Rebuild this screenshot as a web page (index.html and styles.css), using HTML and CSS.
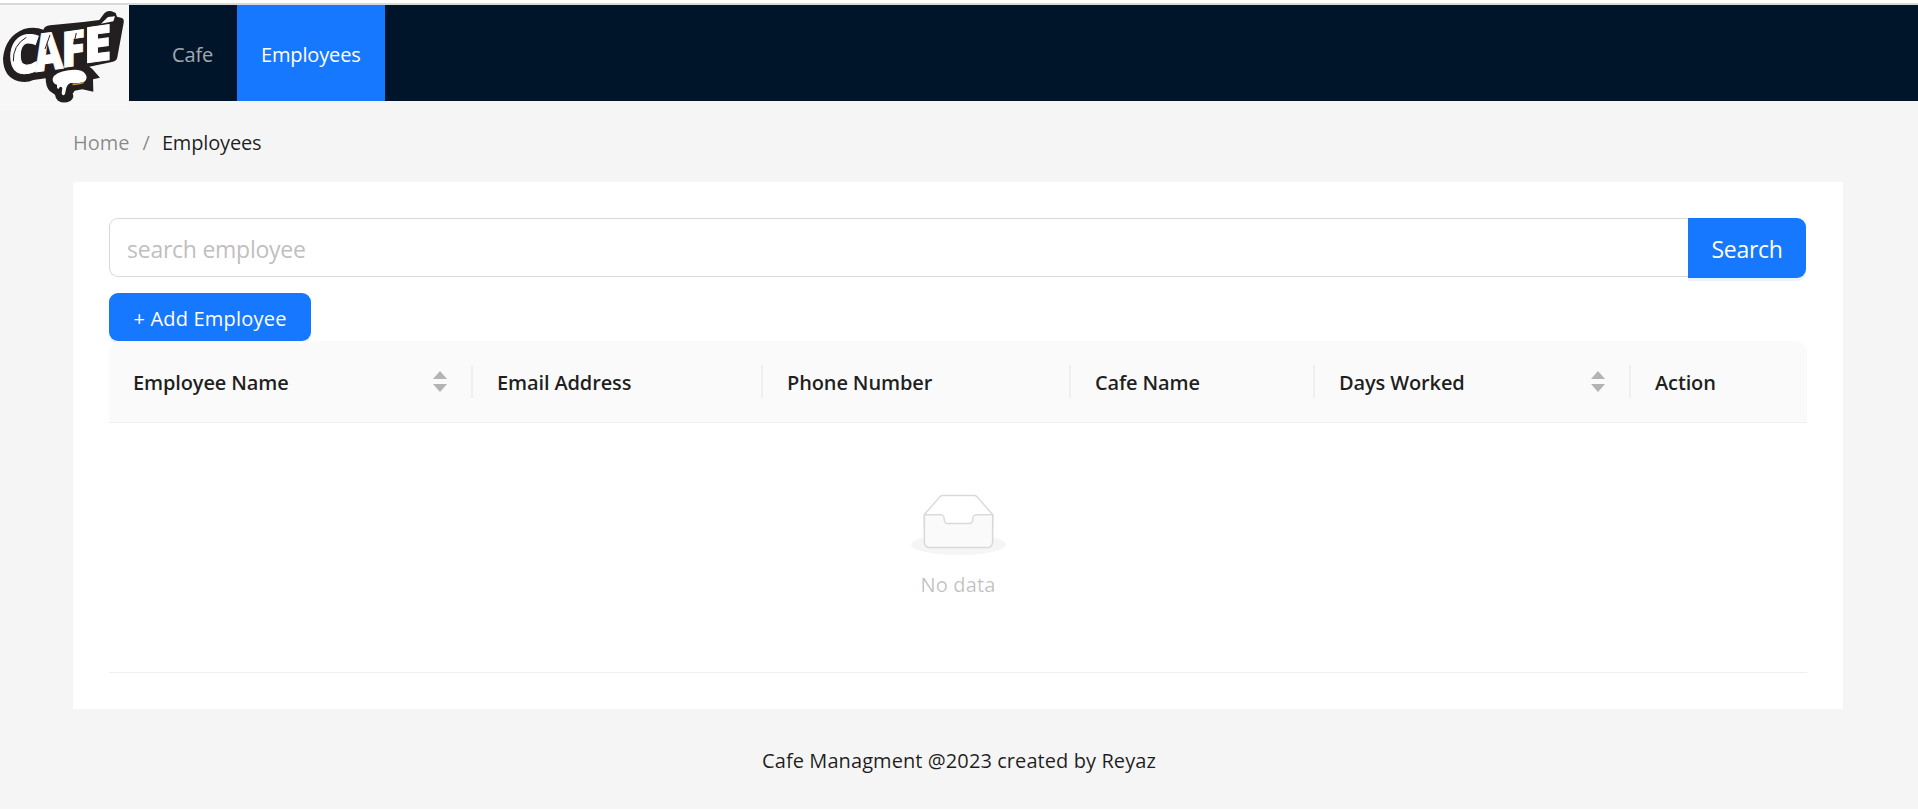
FILE: index.html
```html
<!DOCTYPE html>
<html lang="en">
<head>
<meta charset="utf-8">
<title>Cafe Management</title>
<link rel="stylesheet" href="styles.css">
</head>
<body>
<div class="layout">
  <header class="header">
    <svg class="logo" viewBox="0 15 387 315" role="img" aria-label="Cafe logo">
      <rect x="0" y="15" width="387" height="315" fill="#f7f7f7"/>
      <path d="M130 89Q135 77 150 76L250 66L298 60L313 40Q322 31 335 34L347 39L351 50L366 54Q373 58 371 68L352 172Q350 183 339 185L268 200L277 207L300 233L279 238L280 275L247 268L224 272L218 281Q224 292 212 302Q192 313 174 302Q166 294 165 284L149 273Q137 260 137 235L100 240Q82 250 55 244Q10 232 9 175Q15 110 72 87Q105 79 130 89Z" fill="#231f20"/>
      <g class="logo-letters">
        <text x="0" y="0" font-size="158" textLength="94" lengthAdjust="spacingAndGlyphs" transform="translate(24 225) rotate(-6) skewX(-7)">C</text>
        <text x="0" y="0" font-size="155" textLength="84" lengthAdjust="spacingAndGlyphs" transform="translate(107 216) rotate(-8) skewX(-3)">A</text>
        <text x="0" y="0" font-size="146" textLength="72" lengthAdjust="spacingAndGlyphs" transform="translate(184 203) rotate(-8) skewX(-8)">F</text>
        <text x="0" y="0" font-size="146" textLength="84" lengthAdjust="spacingAndGlyphs" transform="translate(251 190) rotate(-8) skewX(-8)">E</text>
      </g>
      <path d="M303 71L324 51L345 49L340 64Z" fill="#fff"/>
      <path d="M40 184Q38 136 79 112M135 147L150 105M221 132L229 99" fill="none" stroke="#231f20" stroke-width="3"/>
      <path d="M158 236Q165 216 205 211Q244 205 256 222Q265 235 253 245Q232 251 211 249Q202 253 199 263L195 282Q188 290 185 280L187 264Q181 256 176 266Q170 268 171 254Q157 250 158 236Z" fill="#fff"/>
      <path d="M218 254Q236 253 251 248" fill="none" stroke="#d9a12b" stroke-width="4"/>
    </svg>
    <nav class="menu">
      <a class="menu-item">Cafe</a>
      <a class="menu-item menu-item-selected">Employees</a>
    </nav>
  </header>

  <main class="content">
    <div class="breadcrumb">
      <span class="crumb-home">Home</span><span class="crumb-sep">/</span><span class="crumb-current">Employees</span>
    </div>
    <section class="card">
      <div class="search">
        <input class="search-input" type="text" placeholder="search employee">
        <button class="search-button">Search</button>
      </div>
      <button class="add-button">+ Add Employee</button>
      <div class="table">
        <div class="table-head">
          <div class="cell"><span>Employee Name</span>
            <svg class="sorter" viewBox="0 0 14 22"><path d="M7 0L14 8H0ZM0 13H14L7 21Z"/></svg></div>
          <div class="cell"><span>Email Address</span></div>
          <div class="cell"><span>Phone Number</span></div>
          <div class="cell"><span>Cafe Name</span></div>
          <div class="cell"><span>Days Worked</span>
            <svg class="sorter" viewBox="0 0 14 22"><path d="M7 0L14 8H0ZM0 13H14L7 21Z"/></svg></div>
          <div class="cell"><span>Action</span></div>
        </div>
        <div class="empty">
          <svg class="empty-icon" viewBox="0 0 64 41">
            <g transform="translate(0 1)" fill="none" fill-rule="evenodd">
              <ellipse fill="#f5f5f5" cx="32" cy="33" rx="32" ry="7"/>
              <g fill-rule="nonzero" stroke="#d9d9d9">
                <path d="M55 12.76L44.854 1.258C44.367.474 43.656 0 42.907 0H21.093c-.749 0-1.46.474-1.947 1.257L9 12.761V22h46v-9.24z" fill="#fff"/>
                <path d="M41.613 15.931c0-1.605.994-2.93 2.227-2.931H55v18.137C55 33.26 53.68 35 52.05 35h-40.1C10.32 35 9 33.259 9 31.137V13h11.16c1.233 0 2.227 1.323 2.227 2.928v.022c0 1.605 1.005 2.901 2.237 2.901h14.752c1.232 0 2.237-1.308 2.237-2.913v-.007z" fill="#fafafa"/>
              </g>
            </g>
          </svg>
          <div class="empty-text">No data</div>
        </div>
      </div>
    </section>
  </main>
  <footer class="footer">Cafe Managment @2023 created by Reyaz</footer>
</div>
</body>
</html>
```

FILE: styles.css
```css
* { box-sizing: border-box; }

body {
  margin: 0;
  background: #fff;
  color: rgba(0, 0, 0, 0.88);
  font-family: "Segoe UI", "Open Sans", "Noto Sans", sans-serif;
  font-size: 20px;
  line-height: 33px;
}

button, input { font-family: inherit; }

.layout {
  height: 806px;
  margin-top: 3px;
  border-top: 2px solid #d9d9d9;
  background: #f5f5f5;
}

.header {
  display: flex;
  align-items: flex-start;
  height: 96px;
  background: #001529;
}

.logo {
  flex: none;
  width: 129px;
  height: 105px;
}

.logo-letters {
  fill: #fff;
  stroke: #fff;
  stroke-width: 3px;
  font-family: "Open Sans", sans-serif;
  font-weight: 800;
}

.menu {
  display: flex;
  margin-left: 19px;
  letter-spacing: -0.15px;
  line-height: 99px;
}

.menu-item {
  width: 89px;
  height: 96px;
  padding-left: 24px;
  color: rgba(255, 255, 255, 0.65);
}

.menu-item-selected {
  width: 148px;
  background: #1677ff;
  color: #fff;
}

.content { padding: 0 75px 0 73px; }

.breadcrumb {
  display: flex;
  height: 81px;
  padding-top: 25px;
}

.crumb-home, .crumb-sep { color: rgba(0, 0, 0, 0.45); }
.crumb-sep { margin: 0 12px 0 13px; }
.crumb-current { letter-spacing: -0.15px; }

.card {
  height: 527px;
  padding: 36px 36px 36px 36px;
  background: #fff;
}

.search { display: flex; height: 60px; margin-right: 1px; }

.search-input {
  flex: 1;
  height: 59px;
  padding: 2px 16px 0 17px;
  border: 1px solid #d9d9d9;
  border-right: 0;
  border-radius: 9px 0 0 9px;
  outline: 0;
  background: #fff;
  font-size: 23px;
  letter-spacing: -0.25px;
}

.search-input::placeholder { color: #bfbfbf; }

.search-button {
  width: 118px;
  height: 60px;
  padding: 1px 0 0;
  border: 0;
  border-radius: 0 9px 9px 0;
  background: #1677ff;
  box-shadow: 0 3px 0 rgba(5, 145, 255, 0.1);
  color: #fff;
  font-size: 23px;
  letter-spacing: -0.3px;
}

.add-button {
  display: block;
  width: 202px;
  height: 48px;
  margin-top: 15px;
  padding: 2px 0 0;
  border: 0;
  border-radius: 9px;
  background: #1677ff;
  box-shadow: 0 3px 0 rgba(5, 145, 255, 0.1);
  color: #fff;
  font-size: 20px;
  letter-spacing: 0.2px;
}

.table { border-bottom: 1px solid #f0f0f0; }

.table-head {
  display: grid;
  grid-template-columns: 364px 290px 308px 244px 316px 1fr;
  height: 82px;
  border-bottom: 1px solid #f0f0f0;
  border-radius: 12px 12px 0 0;
  background: #fafafa;
  font-weight: 600;
  letter-spacing: -0.13px;
}

.cell {
  display: flex;
  align-items: center;
  justify-content: space-between;
  padding: 1px 0 0 24px;
  background: linear-gradient(#f0f0f0, #f0f0f0) right 24px / 2px 33px no-repeat;
}

.cell:last-child { background: none; }

.sorter {
  width: 14px;
  height: 22px;
  margin-right: 26px;
  fill: #b3b3b3;
}

.empty {
  display: flex;
  flex-direction: column;
  align-items: center;
  height: 249px;
  padding-top: 71px;
  color: rgba(0, 0, 0, 0.25);
}

.empty-icon { width: 95px; height: 61px; }
.empty-text { margin-top: 13px; letter-spacing: 0.15px; }

.footer {
  padding-top: 35px;
  letter-spacing: 0.08px;
  text-align: center;
}
```
